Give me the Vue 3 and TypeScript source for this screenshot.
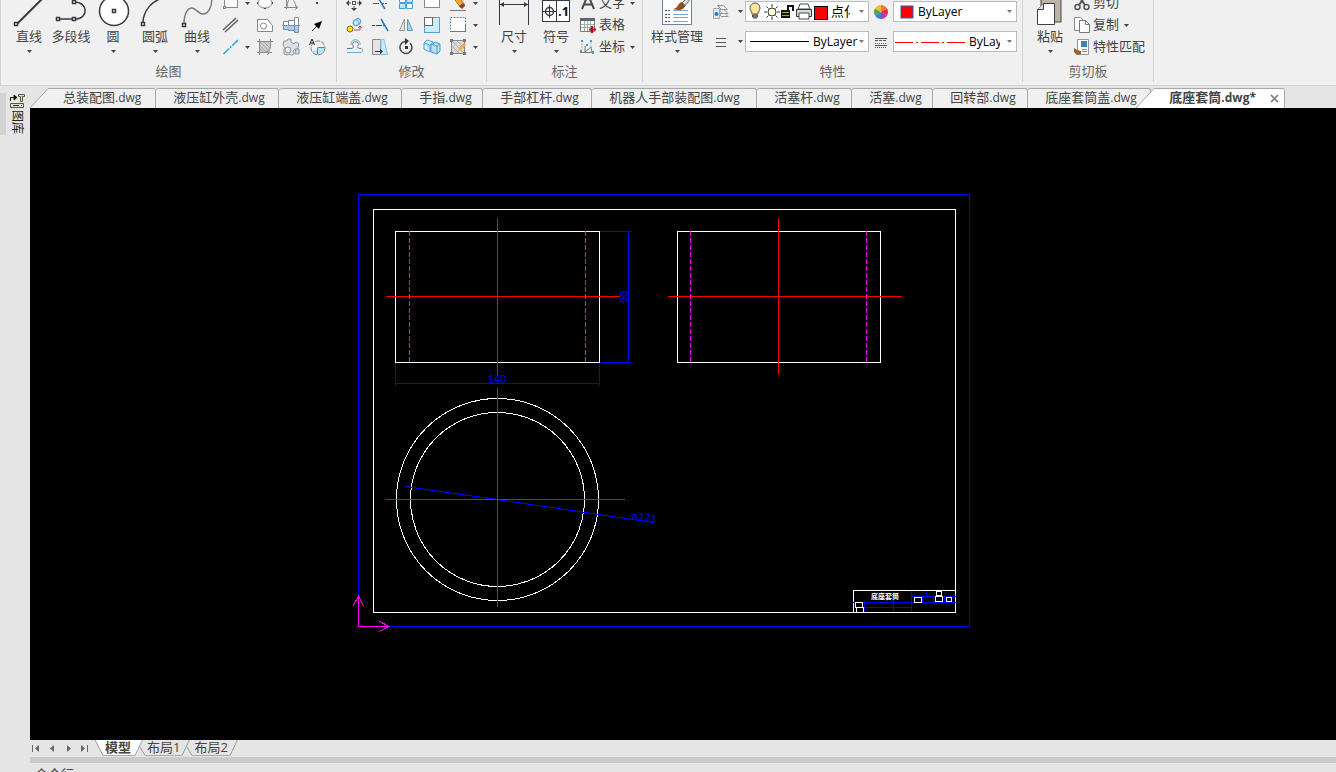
<script setup lang="ts">
import { ref } from 'vue'

interface FileTab {
  name: string
  ext: string
}

const files: FileTab[] = [
  { name: '总装配图', ext: '.dwg' },
  { name: '液压缸外壳', ext: '.dwg' },
  { name: '液压缸端盖', ext: '.dwg' },
  { name: '手指', ext: '.dwg' },
  { name: '手部杠杆', ext: '.dwg' },
  { name: '机器人手部装配图', ext: '.dwg' },
  { name: '活塞杆', ext: '.dwg' },
  { name: '活塞', ext: '.dwg' },
  { name: '回转部', ext: '.dwg' },
  { name: '底座套筒盖', ext: '.dwg' },
  { name: '底座套筒', ext: '.dwg*' },
]
const activeFile = ref(10)

const layouts: string[] = ['模型', '布局1', '布局2']
const activeLayout = ref(0)
</script>

<template>
  <div class="app">
    <header class="ribbon">
      <section class="group" aria-label="绘图">
        <div class="body draw-body">
          <button class="big">
            <svg width="42" height="34" class="ink"><path d="M9 30 37 2" stroke-width="2" /><rect x="6.5" y="28.5" width="3" height="3" fill="#fff" /></svg>
            <span>直线</span><svg class="caret" width="5" height="3"><path d="M0 0h5L2.5 3z" /></svg>
          </button>
          <button class="big">
            <svg width="42" height="34" class="ink"><path d="M8 25h18c12 0 13-17-2-17" /><rect x="6.5" y="23.5" width="3" height="3" fill="#fff" /><rect x="22.5" y="23.5" width="3" height="3" fill="#fff" /><rect x="22.5" y="6.5" width="3" height="3" fill="#fff" /></svg>
            <span>多段线</span>
          </button>
          <button class="big">
            <svg width="42" height="34" class="ink"><circle cx="22" cy="17" r="14.5" fill="#fff" /><rect x="20.5" y="15.5" width="3" height="3" fill="#fff" /></svg>
            <span>圆</span><svg class="caret" width="5" height="3"><path d="M0 0h5L2.5 3z" /></svg>
          </button>
          <button class="big">
            <svg width="42" height="34" class="ink"><path d="M9 29C9 18 17 5 34 3" /><rect x="7.5" y="28.5" width="3" height="3" fill="#fff" /></svg>
            <span>圆弧</span><svg class="caret" width="5" height="3"><path d="M0 0h5L2.5 3z" /></svg>
          </button>
          <button class="big">
            <svg width="42" height="34" class="ink"><path d="M8 30C8 19 12 14 16 14S23 21 28 20 36 12 36 2" stroke="#777b82" /><rect x="6.5" y="29.5" width="3" height="3" fill="#fff" /></svg>
            <span>曲线</span><svg class="caret" width="5" height="3"><path d="M0 0h5L2.5 3z" /></svg>
          </button>
          <div class="tools draw-tools">
            <button aria-label="矩形"><svg width="18" height="18" class="gray"><rect x="3.5" y="2.5" width="13" height="11" fill="#fff" /><rect x="2.5" y="12.5" width="2" height="2" fill="#fff" /></svg></button>
            <button aria-label="更多矩形"><svg class="caret" width="5" height="3"><path d="M0 0h5L2.5 3z" /></svg></button>
            <button aria-label="椭圆"><svg width="18" height="18" class="gray"><ellipse cx="9" cy="9" rx="7" ry="5" fill="#fff" /><path d="M1.5 8v2M16.500 8v2M8 14.500h2" stroke="#444" /></svg></button>
            <button aria-label="函数曲线"><svg width="18" height="18" class="gray"><path d="M4.500 2v13M2 13.500h13M13 11.500l3 2-3 2M5 13C6 2 11 2 14 12" /></svg></button>
            <button aria-label="点"><svg width="18" height="18"><rect x="8" y="8" width="2" height="2" fill="#444" /></svg></button>

            <button aria-label="双线"><svg width="18" height="18"><path d="M2 14 15 2M4 16 17 4" stroke="#5d6066" stroke-width="1.500" /></svg></button>
            <span></span>
            <button aria-label="面域"><svg width="18" height="18" class="gray"><path d="M1.500 3.500h10l5 6v6h-15z" fill="#fff" /><circle cx="7.500" cy="10" r="3" /></svg></button>
            <button aria-label="轴"><svg width="18" height="18" class="blue"><path d="M1.500 5.500h5v8h-5zM6.500 4.500h6v10h-6zM12.500 1.500h4v15h-4z" fill="#fff" stroke="#7d8b9b" /><path d="M2 10h5v3H2zM7 10h5v4H7zM13 10h3v6h-3z" fill="#a9cdec" stroke="none" /><path d="M0 9.500h18" /></svg></button>
            <button aria-label="箭头"><svg width="18" height="18"><path d="M4 15 10 9" stroke="#222" /><path d="M14 5 11 13 6 8z" fill="#000" /></svg></button>

            <button aria-label="中心线"><svg width="18" height="18"><path d="M2.500 16 17 2" stroke="#27a8e0" stroke-width="1.500" stroke-dasharray="8 1 2 1" /></svg></button>
            <button aria-label="更多中心线"><svg class="caret" width="5" height="3"><path d="M0 0h5L2.5 3z" /></svg></button>
            <button aria-label="填充"><svg width="18" height="18" class="gray"><path d="M4 4h10v10H4z" fill="#c8cacc" stroke="none" /><path d="M4 8l6 6M4 4l10 10M8 4l6 6M4 11l3 3" stroke="#aaaeb2" /><path d="M3.500 1v16M1 3.500h16M14.500 1v9l-5 5M1 14.500h15M14 14l-3 3" stroke="#888" /></svg></button>
            <button aria-label="齿轮"><svg width="18" height="18"><path d="M2 3h3l1-2h3v3l3 2 2-2 3 2-1 3v2h-3l-2 2 1 2-1 2H9l-1-1-3 1-3-1v-4l1-2-2-3z" fill="#dce2e8" stroke="#8b97a6" /><circle cx="6" cy="12" r="3" fill="#f0f0f0" stroke="#8b97a6" /><path d="M14 11h3v5h-4v-2z" fill="#cfd8e1" stroke="#8b97a6" /></svg></button>
            <button aria-label="图形标注"><svg width="18" height="18"><path d="M9.500 9.500h7a7 7 0 0 1-13 4l6-2z" fill="#b5e1fa" /><circle cx="10" cy="10" r="7" fill="none" stroke="#7f858b" stroke-dasharray="5 1" /><path d="M9.500 10v6.500M9.500 9.500h7" stroke="#398fc5" /><path d="M1.500 7 4 1l2.500 6M2.500 5h3" stroke="#222" fill="none" /></svg></button>
          </div>
        </div>
        <h2>绘图</h2>
      </section>

      <section class="group" aria-label="修改">
        <div class="body modify-body">
          <div class="tools modify-tools">
            <button aria-label="移动"><svg width="18" height="18"><rect x="7.500" y="7.500" width="3" height="3" fill="#fff" stroke="#555" /><path d="M9 1l3 3H6zM9 17l3-3H6zM1 9l3-3v6zM17 9l-3-3v6z" fill="#3d4147" /><path d="M3 9h3M12 9h3M9 12v3" stroke="#555" /></svg></button>
            <button aria-label="修剪"><svg width="18" height="18"><path d="M2 9.500h6M11 9.500h2M14 9.500h2" stroke="#555" /><path d="M6 2 14 15" stroke="#2877c7" stroke-width="1.500" /></svg></button>
            <button aria-label="阵列"><svg width="18" height="18" class="blue"><path d="M2.500 2.500h6v6h-6zM9.500 9.500h6v5h-6z" fill="#fff" /><path d="M9.500 2.500h6v6h-6zM2.500 9.500h6v5h-6z" fill="#bfe5fa" /></svg></button>
            <button aria-label="矩形区域"><svg width="18" height="18"><rect x="1.500" y="1.500" width="15" height="12" fill="#fff" stroke="#888" /></svg></button>
            <button aria-label="删除"><svg width="18" height="18"><path d="M1 16.500h16" stroke="#777" /><path d="M3 2 8 1 16 11 12 14z" fill="#f3a82b" stroke="#c0731c" /><path d="m10 12 4-3 2 3-3 3z" fill="#8d472d" /></svg></button>
            <button aria-label="更多删除"><svg class="caret" width="5" height="3"><path d="M0 0h5L2.5 3z" /></svg></button>

            <button aria-label="复制对象"><svg width="18" height="18"><ellipse cx="12" cy="6" rx="4" ry="3" transform="rotate(-35 12 6)" fill="#c6e9fb" stroke="#4b9fcf" /><circle cx="11" cy="7" r="3" fill="none" stroke="#6aaed4" /><circle cx="5" cy="13" r="3" fill="#ffdf00" stroke="#817123" /><path d="M9 14h6v-3M13 12l2-2 2 2" stroke="#ab5147" fill="none" /></svg></button>
            <button aria-label="延伸"><svg width="18" height="18"><path d="M1 9.500h3M5 9.500h6" stroke="#444" /><path d="M12 9.500h2M10 3l7 12" stroke="#2877c7" stroke-width="1.500" /></svg></button>
            <button aria-label="镜像"><svg width="18" height="18"><path d="M7.500 3v11.500h-5z" fill="#e4e4e4" stroke="#999" /><path d="M10.500 3v11.500h5z" fill="#a6d8f3" stroke="#5a97bc" /></svg></button>
            <button aria-label="缩放"><svg width="18" height="18"><rect x="1.500" y="1.500" width="15" height="15" fill="#c9effd" stroke="#5b9ccc" /><rect x="1.500" y="1.500" width="8" height="8" fill="#fff" stroke="#666" /></svg></button>
            <button aria-label="拉伸"><svg width="18" height="18"><rect x="1.500" y="1.500" width="15" height="14" fill="#fff" stroke="#777" /><path d="M1.500 15V1.500h15V8" stroke="#9bd4f5" fill="none" stroke-dasharray="2 1" /></svg></button>
            <button aria-label="更多拉伸"><svg class="caret" width="5" height="3"><path d="M0 0h5L2.5 3z" /></svg></button>

            <button aria-label="偏移"><svg width="18" height="18" fill="none"><path d="M2 10.500h4c2 0 3-1 2-3-2-5 7-5 5 0-1 2 0 3 3 3" stroke="#63737f" /><path d="M2 14.500h14c2-1 2-4 0-4M6 7c-1-7 10-7 9 0" stroke="#69aed8" /></svg></button>
            <button aria-label="倒角"><svg width="18" height="18"><path d="M1.500 1.500h8v15h-8z" fill="#e4e4e4" stroke="#888" /><path d="M10 1.500h3l3.500 15H10z" fill="#c6ebfb" stroke="#8cc3e2" /><path d="M4 13.500h7" stroke="#333" /><path d="m9 11 3 2.500L9 16z" fill="#333" /></svg></button>
            <button aria-label="旋转"><svg width="18" height="18"><path d="M8 3.500a6 6 0 1 0 5 1.500" fill="none" stroke="#444a52" stroke-width="1.500" /><path d="M8 0l4 3-4 4z" fill="#333" /><rect x="8" y="8" width="3" height="3" fill="#333" /></svg></button>
            <button aria-label="三维阵列"><svg width="18" height="18" class="blue"><path d="M1 5l3-3 6 2v7l-3 3-6-3z" fill="#daf3ff" /><path d="M9 7l3-3 5 2v7l-3 3-6-2V6l6 2v8M14 8l3-2M1 5l6 2v7M7 7l3-3" fill="#b8e4fa" /></svg></button>
            <button aria-label="编辑填充"><svg width="18" height="18" class="gray"><rect x="2.500" y="2.500" width="13" height="13" fill="#d8d8d8" /><path d="M3 8l7 7M3 3l12 12M8 3l7 7" stroke="#b0b0b0" /><path d="M1 1h3v3H1zM14 1h3v3h-3zM1 14h3v3H1zM14 14h3v3h-3z" fill="#777" stroke="none" /><path d="m9 13 1-3 5-5 2 2-5 5z" fill="#f4ad36" stroke="none" /></svg></button>
            <button aria-label="更多填充"><svg class="caret" width="5" height="3"><path d="M0 0h5L2.5 3z" /></svg></button>
          </div>
        </div>
        <h2>修改</h2>
      </section>

      <section class="group" aria-label="标注">
        <div class="body mark-body">
          <button class="big">
            <svg width="42" height="34" class="ink"><path d="M6.500 2v29M35.500 2v29M7 10.500h28" stroke-width="1" /><path d="M7 10.500l4-2.500v5zM35 10.500l-4-2.500v5z" fill="#353a42" stroke="none" /></svg>
            <span>尺寸</span><svg class="caret" width="5" height="3"><path d="M0 0h5L2.5 3z" /></svg>
          </button>
          <button class="big">
            <svg width="42" height="34" class="ink"><rect x="7.500" y="6.500" width="27" height="21" fill="#fff" stroke-width="1" /><path d="M21.500 6v22M8 17.500h13M14.500 11v13" stroke-width="1" /><circle cx="14.500" cy="17.500" r="4" /><text x="23" y="22" class="symbol">.1</text></svg>
            <span>符号</span><svg class="caret" width="5" height="3"><path d="M0 0h5L2.5 3z" /></svg>
          </button>
          <div class="rows">
            <button class="row"><svg width="18" height="18"><path d="M3 15 8 3h2l5 12M5 10.500h8" fill="none" stroke="#444a52" stroke-width="2" /></svg><span>文字</span><svg class="caret" width="5" height="3"><path d="M0 0h5L2.5 3z" /></svg></button>
            <button class="row"><svg width="18" height="18"><path d="M1.500 2.500h14v13h-14z" fill="#fff" stroke="#777" /><path d="M1 2h15v3H1z" fill="#62666c" /><path d="M2 8.500h13M2 11.500h13M5.500 5v10M8.500 5v10M11.500 5v10" stroke="#aaa" /><path d="M13 10v7M10 13.500h7" stroke="#b30e17" stroke-width="2" /></svg><span>表格</span></button>
            <button class="row"><svg width="18" height="18"><path d="M6 8v6M1 14.500h13M6 14l6-5 1 5" stroke="#777" fill="none" /><path d="M2 2h2v2H2zM11 2h2v2h-2zM1 12h2v2H1zM7 6h2v2H7zM13 13h2v3h-2z" fill="#429bd1" /><path d="M3 5v7M12 4v5" stroke="#8db6d1" stroke-dasharray="2 1" /></svg><span>坐标</span><svg class="caret" width="5" height="3"><path d="M0 0h5L2.5 3z" /></svg></button>
          </div>
        </div>
        <h2>标注</h2>
      </section>

      <section class="group" aria-label="特性">
        <div class="body props-body">
          <button class="big wide">
            <svg width="42" height="34"><rect x="6.500" y="2.500" width="29" height="28" fill="#fff" stroke="#6f8398" stroke-width="1" /><path d="M9 16.500h5M9 20.500h5M9 23.500h5M9 27.500h5" stroke="#555" stroke-dasharray="2 1" /><path d="M17 16.500h15M17 20.500h15M17 23.500h15M17 27.500h15" stroke="#79a6d1" /><path d="M33 2 25 10l3 3 8-10z" fill="#d9d9d9" stroke="#666" /><path d="M26 8c-5 1-3 6-9 7 6 2 12 1 12-4z" fill="#90511d" /></svg>
            <span>样式管理</span><svg class="caret" width="5" height="3"><path d="M0 0h5L2.5 3z" /></svg>
          </button>
          <div class="props">
            <button aria-label="图层管理"><svg width="18" height="18"><path d="M5.500 2.500h6l4 4h-6zM7 6.500h5l4 4h-6zM8 10.500h5l3 3H9z" fill="#f5f5f5" stroke="#8d959c" /><rect x="1.500" y="5.500" width="6" height="10" fill="#dceaf5" stroke="#a3acb4" /><circle cx="4.500" cy="11" r="2" fill="#297ab9" /></svg></button>
            <button aria-label="更多图层"><svg class="caret" width="5" height="3"><path d="M0 0h5L2.5 3z" /></svg></button>
            <label class="combo">
              <svg width="82" height="19">
                <path d="M6 13c0-3-2-3-2-6a5 5 0 0 1 10 0c0 3-2 3-2 6z" transform="translate(0 -1)" fill="#ffe69a" stroke="#55504a" /><path d="M6.500 13h5v2h-5zM7 16h4" fill="#999" stroke="#444" />
                <circle cx="26" cy="10" r="4" fill="#fffad9" stroke="#333" /><path d="M26 2v3M26 15v3M18 10h3M31 10h3M20.500 4.500l2 2M29.500 13.500l2 2M20.500 15.500l2-2M29.500 6.500l2-2" stroke="#333" />
                <path d="M35 8h9v8h-9z" fill="#111" /><path d="M36 10.500h7M36 13.500h7" stroke="#aaa928" /><path d="M42 8V4h5v5" fill="none" stroke="#111" stroke-width="2" />
                <path d="M52 7 54 2h8l2 5z" fill="#fff" stroke="#444" /><path d="M50.500 7.500h15v7h-15z" fill="#d7dce0" stroke="#333" /><path d="M53 11h10v6H53z" fill="#fff" stroke="#444" />
                <rect x="68.500" y="4.500" width="13" height="13" fill="#f00" stroke="#000" />
              </svg>
              <select class="layer" aria-label="图层"><option>点化</option></select>
              <svg class="caret pale" width="5" height="3"><path d="M0 0h5L2.5 3z" /></svg>
            </label>
            <button aria-label="颜色"><svg width="18" height="18"><path d="M9 9V2a7 7 0 0 1 6 3.500z" fill="#f17732" /><path d="m9 9 6-3.500a7 7 0 0 1 0 7z" fill="#e43042" /><path d="m9 9 6 3.500A7 7 0 0 1 9 16z" fill="#b23aaa" /><path d="M9 9v7a7 7 0 0 1-6-3.500z" fill="#377fe4" /><path d="m9 9-6 3.500a7 7 0 0 1 0-7z" fill="#43aa4b" /><path d="M9 9 3 5.500A7 7 0 0 1 9 2z" fill="#f4bc2d" /></svg></button>
            <label class="combo color-combo">
              <svg width="14" height="14"><rect x="1" y="1" width="12" height="12" fill="#f00" stroke="#1267c3" stroke-width="1" /></svg>
              <select aria-label="颜色"><option>ByLayer</option></select>
              <svg class="caret pale" width="5" height="3"><path d="M0 0h5L2.5 3z" /></svg>
            </label>

            <button aria-label="线宽"><svg width="18" height="18"><path d="M4 5.500h10M4 9.500h10M4 13.500h10" stroke="#555" /></svg></button>
            <button aria-label="更多线宽"><svg class="caret" width="5" height="3"><path d="M0 0h5L2.5 3z" /></svg></button>
            <label class="combo weight-combo">
              <svg width="59" height="3"><path d="M0 1.500h59" stroke="#000" /></svg>
              <select aria-label="线宽"><option>ByLayer</option></select>
              <svg class="caret pale" width="5" height="3"><path d="M0 0h5L2.5 3z" /></svg>
            </label>
            <button aria-label="线型"><svg width="18" height="18"><path d="M3 5.500h12M3 12.500h12" stroke="#555" /><path d="M3 7.500h12" stroke="#555" stroke-dasharray="3 1" /><path d="M3 10.500h12M3 14.500h12" stroke="#555" stroke-dasharray="1 1" /></svg></button>
            <label class="combo type-combo">
              <svg width="71" height="3"><path d="M0 2.500h71" stroke="#f00" stroke-dasharray="18 3 2 3" /></svg>
              <select class="linetype" aria-label="线型"><option>ByLayer</option></select>
              <svg class="caret pale" width="5" height="3"><path d="M0 0h5L2.5 3z" /></svg>
            </label>
          </div>
        </div>
        <h2>特性</h2>
      </section>

      <section class="group" aria-label="剪切板">
        <div class="body clip-body">
          <button class="big">
            <svg width="42" height="34"><rect x="12" y="0" width="20" height="28" fill="#bcb3a8" stroke="#444" stroke-width="1" /><path d="M8.500 15.500 14.500 9.500h11v21h-17z" fill="#fff" stroke="#3c4046" stroke-width="1" /><path d="M8.500 15.500h6v-6" fill="#ddd" stroke="#3c4046" /></svg>
            <span>粘贴</span><svg class="caret" width="5" height="3"><path d="M0 0h5L2.5 3z" /></svg>
          </button>
          <div class="rows">
            <button class="row"><svg width="18" height="18"><path d="M5 1l7 10M13 1 6 11" stroke="#555" stroke-width="2" /><circle cx="4.500" cy="13" r="2.500" fill="none" stroke="#555" stroke-width="1.500" /><circle cx="13.500" cy="13" r="2.500" fill="none" stroke="#555" stroke-width="1.500" /></svg><span>剪切</span></button>
            <button class="row"><svg width="18" height="18"><path d="M1.500 1.500h6l3 3v10h-9z" fill="#fff" stroke="#888" /><path d="M6.500 4.500h6l4 4v8h-10z" fill="#fff" stroke="#777" /><path d="M12.500 4.500v4h4" fill="none" stroke="#777" /></svg><span>复制</span><svg class="caret" width="5" height="3"><path d="M0 0h5L2.5 3z" /></svg></button>
            <button class="row"><svg width="18" height="18"><path d="M4.500 1.500h11v15h-11z" fill="#fff" stroke="#8797a5" /><path d="M8 3h6v6H8z" fill="#3d83b8" /><path d="M9 11.500h5M9 13.500h5" stroke="#888" /><path d="M1 10l3 2 4 1v3l-4 1-3-3z" fill="#a75a23" /></svg><span>特性匹配</span></button>
          </div>
        </div>
        <h2>剪切板</h2>
      </section>
    </header>

    <div class="main">
      <aside class="side">
        <div class="grip"></div>
        <button class="library">
          <svg width="16" height="16"><rect width="16" height="16" fill="#ebe9d4" /><path d="M1.500 8V4.500h5M5 2l3 2.500L5 7z" stroke="#111" fill="none" /><path d="M5 2l3 2.500L5 7z" fill="#111" /><path d="M9.500 1.500h6v2h-2v5h-2v-5h-2zM1.500 10.500h13v4h-13z" fill="#ddd" stroke="#555" /><path d="M4 12.500h6M12 12.500h1" stroke="#333" /></svg>
          <span>图库</span>
        </button>
      </aside>

      <div class="workspace">
        <nav class="files" aria-label="图纸">
          <button
            v-for="(file, i) in files"
            :key="file.name"
            class="file"
            :class="{ first: i === 0, active: i === activeFile }"
            :style="{ '--chars': file.name.length }"
            @click="activeFile = i"
          >
            <svg v-if="i === 0 || i === activeFile" class="slant" width="20" height="20">
              <path d="M0 20 18 .5H20V20z" /><path class="edge" d="M0 20 18 .5H20" />
            </svg>
            <span class="title"><span>{{ file.name }}</span><span class="ext">{{ file.ext }}</span></span>
            <svg v-if="i === activeFile" class="close" width="9" height="9"><path d="M1 1l7 7M8 1 1 8" /></svg>
          </button>
        </nav>

        <main class="canvas">
          <svg class="sheet" viewBox="30 108 1306 632" preserveAspectRatio="xMidYMid meet">
            <g class="white">
              <rect x="373.500" y="209.500" width="582" height="403" />
              <rect x="395.500" y="231.500" width="204" height="131" />
              <rect x="677.500" y="231.500" width="203" height="131" />
              <circle cx="497.500" cy="499.500" r="101" />
              <circle cx="497.500" cy="499.500" r="87" />
              <path d="M853.500 612V590.500H955" />
            </g>
            <g class="blue-line">
              <rect x="358.500" y="194.500" width="611" height="432" />
              <path d="M600 231.500h31M600 362.500h31M628.500 231v132" />
              <path d="M395.500 363v23M599.500 363v23M395 383.500h205" />
              <path d="M405 486.500 497 499.500 653 522.500" />
              <path d="M853 602.500h103M864 607.500h48M864.500 601v11M893.500 601v11M911.500 591v21M911 596.500h45M926.500 591v6M922.500 596v6M933.500 596v6M944.500 596v6" />
            </g>
            <g class="red-line">
              <path d="M386 296.500h234M497.500 218v157M497.500 388v219M385 499.500h240" />
              <path d="M668 296.500h234M778.500 218v157" />
            </g>
            <path class="hidden-line" d="M409.500 231v132M585.500 231v132M690.500 231v132M866.500 231v132" />
            <g class="ucs">
              <path d="M358.500 596v30.500H389M353 606l5.500-10 5 10M379 621l10 5.500-10 5" />
            </g>
            <g class="cell">
              <rect x="855.500" y="602.500" width="7" height="5" /><rect x="856.500" y="607.500" width="7" height="5" />
              <rect x="914.500" y="597.500" width="7" height="5" /><rect x="936.500" y="591.500" width="5" height="4" />
              <rect x="935.500" y="596.500" width="7" height="5" /><rect x="946.500" y="597.500" width="5" height="4" />
            </g>
            <text class="dim" x="488" y="383">140</text>
            <text class="dim" transform="translate(628 303) rotate(-90)">90</text>
            <text class="dim" transform="translate(631 519) rotate(8)">⌀121</text>
            <text class="name" x="871" y="599">底座套筒</text>
          </svg>
        </main>

        <nav class="layouts" aria-label="布局">
          <button class="step" aria-label="第一个"><svg width="9" height="7"><path d="M0 0h1v7H0zM7 0v7L3 3.500z" /></svg></button>
          <button class="step" aria-label="上一个"><svg width="9" height="7"><path d="M6 0v7L2 3.500z" /></svg></button>
          <button class="step" aria-label="下一个"><svg width="9" height="7"><path d="M3 0v7l4-3.500z" /></svg></button>
          <button class="step" aria-label="最后一个"><svg width="9" height="7"><path d="M1 0v7l4-3.500zM7 0h1v7H7z" /></svg></button>
          <button
            v-for="(layout, i) in layouts"
            :key="layout"
            class="layout"
            :class="{ active: i === activeLayout }"
            @click="activeLayout = i"
          >
            <svg v-if="i === activeLayout" width="8" height="16"><path d="M0 0h8v16z" /><path class="edge" d="M0 0l8 15.500" /></svg>
            <svg v-else width="5" height="16"><path class="edge" d="M0 7l5 8.500" /></svg>
            <span>{{ layout }}</span>
            <svg width="8" height="16"><path d="M0 0h8L0 16z" /><path class="edge" d="M0 15.500 7.500 0" /></svg>
          </button>
        </nav>
        <div class="splitter"></div>
        <div class="command">命令行</div>
      </div>
    </div>
  </div>
</template>

<style>
html,
body {
  margin: 0;
  overflow: hidden;
}
</style>

<style scoped>
.app {
  display: flex;
  flex-direction: column;
  height: 100vh;
  overflow: hidden;
  background: #e5e5e5;
  color: #444;
  font: 13px/18px 'Open Sans', 'Noto Sans CJK SC', sans-serif;
}
button {
  display: flex;
  align-items: center;
  justify-content: center;
  padding: 0;
  border: 0;
  background: none;
  color: inherit;
  font: inherit;
  white-space: nowrap;
}
svg {
  display: block;
  flex: none;
}
.ribbon {
  display: flex;
  flex: none;
  overflow: hidden;
  background: #f0f0f0;
  border-bottom: 1px solid #d2d2d2;
  border-left: 1px solid #d2d2d2;
}
.group {
  display: flex;
  flex-direction: column;
  flex: none;
  height: 82px;
  margin-bottom: 3px;
  border-right: 1px solid #d2d2d2;
}
.group h2 {
  margin: 0;
  padding-top: 4px;
  color: #666;
  font: inherit;
  text-align: center;
}
.body {
  display: flex;
  align-items: flex-end;
  height: 58px;
}
.draw-body {
  padding: 0 6px 0 7px;
}
.modify-body {
  padding: 0 7px 0 4px;
}
.mark-body {
  padding: 0 7px 0 6px;
}
.props-body {
  padding: 0 5px 0 4px;
}
.clip-body {
  padding: 0 8px 0 6px;
}
.big {
  flex-direction: column;
  justify-content: flex-start;
  width: 42px;
  height: 64px;
}
.big span {
  line-height: 16px;
}
.wide {
  width: 60px;
}
.big .caret {
  margin-top: 6px;
}
.caret {
  fill: #444;
}
.pale {
  fill: #777;
}
.ink {
  fill: none;
  stroke: #353a42;
  stroke-width: 1.5;
}
.gray {
  fill: none;
  stroke: #888;
}
.blue {
  fill: none;
  stroke: #4b9fd5;
}
.symbol {
  fill: #111;
  stroke: none;
  font: bold 13px 'Open Sans', sans-serif;
}
.tools {
  display: grid;
  grid-auto-rows: 22px;
}
.tools button {
  min-width: 0;
}
.draw-tools {
  grid-template-columns: 24px 10px 26px 26px 26px;
}
.modify-tools {
  grid-template-columns: repeat(5, 26px) 8px;
}
.rows {
  display: flex;
  flex-direction: column;
}
.row {
  gap: 2px;
  height: 22px;
  padding-left: 2px;
  justify-content: flex-start;
}
.row span {
  padding-bottom: 2px;
}
.row .caret {
  margin-left: 3px;
}
.props {
  display: grid;
  grid-template-columns: 28px 10px 124px 24px 124px;
  grid-auto-rows: 21px;
  row-gap: 9px;
  padding-bottom: 6px;
}
.combo {
  display: flex;
  align-items: center;
  overflow: hidden;
  box-sizing: border-box;
  padding-right: 4px;
  border: 1px solid #bbb;
  background: #fff;
}
.combo select {
  flex: 1;
  min-width: 0;
  height: 19px;
  margin: 0 4px;
  padding: 0;
  border: 0;
  overflow: hidden;
  appearance: none;
  background: none;
  color: #000;
  font: 12px/19px 'Open Sans', 'Noto Sans CJK SC', sans-serif;
  text-overflow: clip;
}
.combo .layer {
  margin: 0 9px 0 3px;
  font-size: 13px;
}
.color-combo {
  padding-left: 6px;
}
.weight-combo {
  padding-left: 4px;
}
.combo .linetype {
  margin: 0 7px 0 3px;
}
.weight-combo select {
  margin: 0;
  padding-left: 4px;
}
.type-combo {
  padding-left: 1px;
}
.main {
  display: flex;
  flex: 1;
  min-height: 0;
}
.side {
  display: flex;
  flex: none;
  align-items: flex-start;
  width: 30px;
  padding-top: 7px;
  box-sizing: border-box;
}
.grip {
  width: 6px;
  height: 42px;
  background: #d3d3d3;
}
.library {
  flex-direction: column;
  gap: 1px;
  margin-left: 3px;
}
.library span {
  writing-mode: vertical-rl;
  text-orientation: sideways;
  font-size: 12px;
  line-height: 16px;
  color: #222;
}
.workspace {
  display: flex;
  flex: 1;
  flex-direction: column;
  min-width: 0;
}
.files {
  display: flex;
  flex: none;
  height: 20px;
  padding-top: 2px;
}
.file {
  box-sizing: border-box;
  flex: none;
  justify-content: flex-start;
  width: calc(53px + 14px * var(--chars));
  padding-left: 17px;
  border-top: 1px solid #a8a8a8;
  border-right: 1px solid #a8a8a8;
  border-radius: 3px 3px 0 0;
  background: #f0f0f0;
}
.title {
  display: flex;
  align-items: baseline;
  padding-bottom: 2px;
}
.ext {
  font-size: 12px;
}
.first,
.active.file {
  width: auto;
  padding: 0 14px 0 0;
  border-top: 0;
  background: linear-gradient(#a8a8a8, #a8a8a8) 20px 0 / 100% 1px no-repeat, linear-gradient(#f0f0f0, #f0f0f0) 20px 0 no-repeat;
}
.slant path {
  fill: #f0f0f0;
}
.slant .edge {
  fill: none;
  stroke: #a8a8a8;
}
.slant + .title {
  margin-left: 13px;
}
.active.file {
  z-index: 1;
  margin-left: -15px;
  padding-right: 5px;
  background: linear-gradient(#a8a8a8, #a8a8a8) 20px 0 / 100% 1px no-repeat, linear-gradient(#fff, #fff) 20px 0 no-repeat;
  font-weight: 700;
}
.active .slant path:first-child {
  fill: #fff;
}
.close {
  margin-left: 14px;
  fill: none;
  stroke: #777;
  stroke-width: 1.5;
}
.canvas {
  display: flex;
  flex: 1;
  min-height: 0;
  background: #000;
}
.sheet {
  width: 100%;
  height: 100%;
  fill: none;
  shape-rendering: crispEdges;
}
.white {
  stroke: #fff;
}
.blue-line {
  stroke: #00f;
}
.red-line {
  stroke: #f00;
}
.hidden-line {
  stroke: #f0f;
  stroke-dasharray: 5 2;
}
.ucs {
  stroke: #f0f;
}
.cell {
  fill: #000;
  stroke: #fff;
}
.dim {
  fill: #00f;
  font: 11px 'Liberation Sans', sans-serif;
}
.name {
  fill: #fff;
  font: bold 7px 'Noto Sans CJK SC', sans-serif;
}
.layouts {
  display: flex;
  flex: none;
  height: 16px;
  padding-bottom: 1px;
}
.step {
  width: 16px;
  fill: #666;
}
.step:first-child {
  margin-left: -2px;
}
.layout {
  margin-left: -3px;
}
.step + .layout {
  margin-left: 3px;
}
.layout span {
  box-sizing: border-box;
  height: 16px;
  padding: 0 2px;
  border-bottom: 1px solid #aaa;
  line-height: 14px;
}
.layout path {
  fill: none;
}
.layout .edge {
  stroke: #999;
}
.layout.active {
  font-weight: 700;
}
.layout.active span {
  padding: 0 4px 0 2px;
  background: #fff;
}
.layout.active path:first-child {
  fill: #fff;
}
.splitter {
  flex: none;
  height: 6px;
  background: #cacaca;
}
.command {
  flex: none;
  height: 9px;
  padding-left: 5px;
  overflow: hidden;
  line-height: 22px;
}
</style>
